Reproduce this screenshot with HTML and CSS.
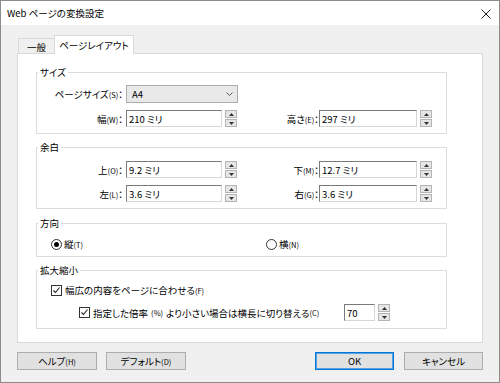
FILE: index.html
```html
<!DOCTYPE html>
<html lang="ja">
<head>
<meta charset="utf-8">
<title>Web ページの変換設定</title>
<link rel="stylesheet" href="styles.css">
</head>
<body>
<div class="window">
  <div class="titlebar">
    <span class="title">Web ページの変換設定</span>
    <svg class="close" width="10" height="10" viewBox="0 0 10 10"><path d="M0.5 0.5 L9.5 9.5 M9.5 0.5 L0.5 9.5" stroke="#222" stroke-width="1" fill="none"/></svg>
  </div>
  <div class="client">
    <div class="tabs">
      <div class="tab tab-general">一般</div>
      <div class="tab tab-active">ページレイアウト</div>
    </div>
    <div class="panel">
      <fieldset class="group g-size">
        <legend>サイズ</legend>
        <div class="rows">
          <div class="row row-combo">
            <span class="lab lab-l">ページサイズ<small>(S)</small>：</span>
            <div class="combo"><span>A4</span><svg width="7" height="4" viewBox="0 0 7 4"><path d="M0.5 0.5 L3.5 3.5 L6.5 0.5" stroke="#606060" fill="none"/></svg></div>
          </div>
          <div class="row">
            <span class="lab lab-l">幅<small>(W)</small>：</span>
            <div class="edit edit-l">210 ミリ</div>
            <div class="spin"><i><svg width="5" height="3" viewBox="0 0 5 3"><path d="M0 3 L2.5 0 L5 3Z" fill="#333"/></svg></i><i><svg width="5" height="3" viewBox="0 0 5 3"><path d="M0 0 L2.5 3 L5 0Z" fill="#333"/></svg></i></div>
            <span class="lab lab-r">高さ<small>(E)</small>：</span>
            <div class="edit edit-r">297 ミリ</div>
            <div class="spin"><i><svg width="5" height="3" viewBox="0 0 5 3"><path d="M0 3 L2.5 0 L5 3Z" fill="#333"/></svg></i><i><svg width="5" height="3" viewBox="0 0 5 3"><path d="M0 0 L2.5 3 L5 0Z" fill="#333"/></svg></i></div>
          </div>
        </div>
      </fieldset>

      <fieldset class="group g-margin">
        <legend>余白</legend>
        <div class="rows">
          <div class="row">
            <span class="lab lab-l">上<small>(O)</small>：</span>
            <div class="edit edit-l">9.2 ミリ</div>
            <div class="spin"><i><svg width="5" height="3" viewBox="0 0 5 3"><path d="M0 3 L2.5 0 L5 3Z" fill="#333"/></svg></i><i><svg width="5" height="3" viewBox="0 0 5 3"><path d="M0 0 L2.5 3 L5 0Z" fill="#333"/></svg></i></div>
            <span class="lab lab-r">下<small>(M)</small>：</span>
            <div class="edit edit-r">12.7 ミリ</div>
            <div class="spin"><i><svg width="5" height="3" viewBox="0 0 5 3"><path d="M0 3 L2.5 0 L5 3Z" fill="#333"/></svg></i><i><svg width="5" height="3" viewBox="0 0 5 3"><path d="M0 0 L2.5 3 L5 0Z" fill="#333"/></svg></i></div>
          </div>
          <div class="row">
            <span class="lab lab-l">左<small>(L)</small>：</span>
            <div class="edit edit-l">3.6 ミリ</div>
            <div class="spin"><i><svg width="5" height="3" viewBox="0 0 5 3"><path d="M0 3 L2.5 0 L5 3Z" fill="#333"/></svg></i><i><svg width="5" height="3" viewBox="0 0 5 3"><path d="M0 0 L2.5 3 L5 0Z" fill="#333"/></svg></i></div>
            <span class="lab lab-r">右<small>(G)</small>：</span>
            <div class="edit edit-r">3.6 ミリ</div>
            <div class="spin"><i><svg width="5" height="3" viewBox="0 0 5 3"><path d="M0 3 L2.5 0 L5 3Z" fill="#333"/></svg></i><i><svg width="5" height="3" viewBox="0 0 5 3"><path d="M0 0 L2.5 3 L5 0Z" fill="#333"/></svg></i></div>
          </div>
        </div>
      </fieldset>

      <fieldset class="group g-orient">
        <legend>方向</legend>
        <div class="rows">
          <div class="row row-radio">
            <span class="opt opt-portrait"><span class="radio checked"></span>縦<small>(T)</small></span>
            <span class="opt"><span class="radio"></span>横<small>(N)</small></span>
          </div>
        </div>
      </fieldset>

      <fieldset class="group g-scale">
        <legend>拡大縮小</legend>
        <div class="rows">
          <div class="row row-check1">
            <span class="opt"><span class="check"><svg width="9" height="9" viewBox="0 0 9 9"><path d="M1.5 4.5 L3.5 6.5 L7.5 1.5" stroke="#222" stroke-width="1.1" fill="none"/></svg></span>幅広の内容をページに合わせる<small>(F)</small></span>
          </div>
          <div class="row row-check2">
            <span class="opt opt-shrink"><span class="check"><svg width="9" height="9" viewBox="0 0 9 9"><path d="M1.5 4.5 L3.5 6.5 L7.5 1.5" stroke="#222" stroke-width="1.1" fill="none"/></svg></span>指定した倍率<small class="pct">(%)</small>より小さい場合は横長に切り替える<small>(C)</small></span>
            <div class="edit edit-pct">70</div>
            <div class="spin"><i><svg width="5" height="3" viewBox="0 0 5 3"><path d="M0 3 L2.5 0 L5 3Z" fill="#333"/></svg></i><i><svg width="5" height="3" viewBox="0 0 5 3"><path d="M0 0 L2.5 3 L5 0Z" fill="#333"/></svg></i></div>
          </div>
        </div>
      </fieldset>
    </div>
    <div class="buttons">
      <div class="btn-group">
        <div class="btn">ヘルプ<small>(H)</small></div>
        <div class="btn">デフォルト<small>(D)</small></div>
      </div>
      <div class="btn-group">
        <div class="btn btn-default">OK</div>
        <div class="btn">キャンセル</div>
      </div>
    </div>
  </div>
</div>
</body>
</html>
```

FILE: styles.css
```css
* { box-sizing: border-box; }
html, body { margin: 0; padding: 0; }
body {
  width: 500px;
  height: 383px;
  overflow: hidden;
  font-family: "Noto Sans CJK JP", "Noto Sans", sans-serif;
  font-size: 9.5px;
  color: #000;
  font-feature-settings: "palt";
}
small { font-size: 7.5px; }
small.pct { margin: 0 3px; }

.window {
  width: 500px;
  height: 383px;
  border: 1px solid #8c8c8c;
  background: #f0f0f0;
  display: flex;
  flex-direction: column;
}
.titlebar {
  height: 24px;
  flex: none;
  background: #fff;
  display: flex;
  align-items: center;
  justify-content: space-between;
  padding: 0 8px 0 6px;
}
.title { font-size: 9.5px; line-height: 14px; }
.close { display: block; margin-top: 1px; }

.client { padding: 10px 16px 0 16px; }

.tabs {
  display: flex;
  align-items: flex-end;
  height: 18px;
  padding-left: 1px;
}
.tab {
  border: 1px solid #d9d9d9;
  border-bottom: none;
  display: flex;
  align-items: center;
  justify-content: center;
}
.tab-general {
  width: 37px;
  height: 15px;
  background: #f0f0f0;
  padding-top: 1px;
}
.tab-active {
  width: 80px;
  height: 19px;
  margin-left: -1px;
  margin-bottom: -1px;
  background: #fff;
  position: relative;
  z-index: 1;
  padding-bottom: 1px;
}

.panel {
  background: #fff;
  border: 1px solid #d9d9d9;
  height: 290px;
  padding: 10px 0 0 18px;
}

.group {
  width: 411px;
  margin: 0;
  border: 1px solid #dcdcdc;
  padding: 0;
  min-width: 0;
}
.group legend {
  padding: 0 2px;
  margin-left: 1px;
  line-height: 16px;
  height: 16px;
}
.rows { display: flex; flex-direction: column; }

.g-size { margin-bottom: 5px; }
.g-size .rows { padding: 5px 0 6px; gap: 7px; }
.g-margin { margin-bottom: 6px; }
.g-margin .rows { padding: 6px 0 6px; gap: 7px; }
.g-orient { margin-bottom: 5px; }
.g-orient .rows { padding: 5px 0 4px; }
.g-scale .rows { padding: 4px 0 7px; gap: 6px; }

.row { display: flex; align-items: center; height: 17px; }
.row-combo { height: 18px; }
.row-radio, .row-check1 { height: 16px; }

.lab { text-align: right; white-space: nowrap; }
.lab-l { width: 86px; margin-right: 3px; }
.lab-r { width: 82px; }

.combo {
  width: 112px;
  height: 18px;
  border: 1px solid #acacac;
  background: #e9e9e9;
  display: flex;
  align-items: center;
  justify-content: space-between;
  padding: 0 4px 0 5px;
}
.combo svg { display: block; }

.edit {
  height: 17px;
  background: #fff;
  border: 1px solid;
  border-color: #7a7a7a #d6d6d6 #d6d6d6 #7a7a7a;
  padding: 0 2px;
  display: flex;
  align-items: center;
  white-space: nowrap;
}
.edit-l { width: 96px; }
.edit-r { width: 98px; }
.edit-pct { width: 31px; }

.spin {
  width: 12px;
  height: 17px;
  margin-left: 3px;
  display: flex;
  flex-direction: column;
  gap: 1px;
}
.spin i {
  flex: 1;
  border: 1px solid #b4b4b4;
  background: #e6e6e6;
  display: flex;
  align-items: center;
  justify-content: center;
}
.spin svg { display: block; }

.opt { display: flex; align-items: center; white-space: nowrap; }
.row-radio { padding-left: 14px; }
.opt-portrait { width: 215px; }

.radio {
  width: 11px;
  height: 11px;
  border: 1px solid #333;
  border-radius: 50%;
  margin-right: 2px;
  display: flex;
  align-items: center;
  justify-content: center;
  background: #fff;
}
.radio.checked::after {
  content: "";
  width: 5px;
  height: 5px;
  border-radius: 50%;
  background: #000;
}

.check {
  width: 11px;
  height: 11px;
  border: 1px solid #333;
  margin-right: 3px;
  display: flex;
  align-items: center;
  justify-content: center;
  background: #fff;
}
.check svg { display: block; }
.row-check1 { padding-left: 14px; }
.row-check2 { padding-left: 42px; }
.opt-shrink { width: 265px; }

.buttons {
  margin-top: 9px;
  display: flex;
  justify-content: space-between;
}
.btn-group { display: flex; gap: 9px; }
.btn {
  width: 80px;
  height: 18px;
  border: 1px solid #adadad;
  background: #e1e1e1;
  display: flex;
  align-items: center;
  justify-content: center;
  white-space: nowrap;
}
.btn-group + .btn-group .btn { width: 79px; margin-left: 1px; }
.btn-default {
  border-color: #0078d7;
  box-shadow: inset 0 0 0 1px #5aa0e0;
}
```
